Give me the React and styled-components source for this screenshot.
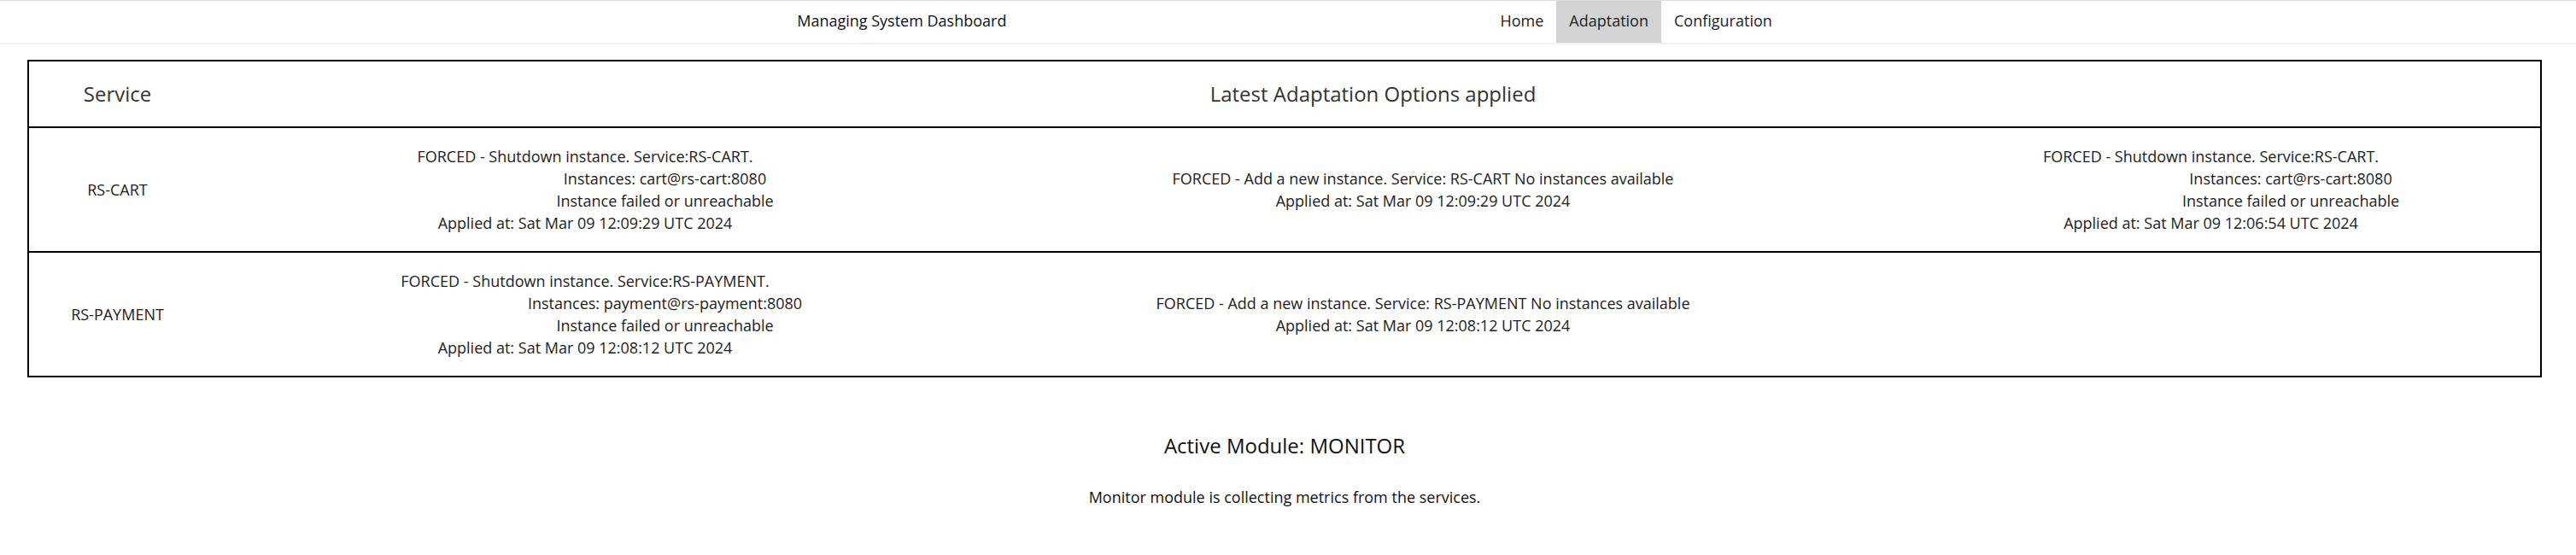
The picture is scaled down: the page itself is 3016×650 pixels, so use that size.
import React from 'react';
import styled, { createGlobalStyle } from 'styled-components';

const GlobalStyle = createGlobalStyle`
  body {
    margin: 0;
    background: #ffffff;
    font-family: "Open Sans", "DejaVu Sans", sans-serif;
    font-size: 18px;
    color: #222222;
  }
`;

const NavBar = styled.nav`
  display: flex;
  justify-content: center;
  align-items: stretch;
  gap: 563px;
  height: 49px;
  padding-left: 7px;
  border-top: 1px solid #dddddd;
  border-bottom: 2px solid #f1f1f1;
`;

const Brand = styled.div`
  display: flex;
  align-items: center;
  padding-bottom: 3px;
  color: #111111;
`;

const NavLinks = styled.ul`
  display: flex;
  margin: 0;
  padding: 0;
  list-style: none;
`;

const NavLink = styled.li`
  display: flex;
  align-items: center;
  padding: 0 15px 3px;
  color: #222222;
  background: ${(p) => (p.active ? '#d3d3d3' : 'transparent')};
  cursor: pointer;
`;

const Main = styled.main`
  margin: 18px 40px 0 32px;
`;

const Table = styled.table`
  width: 100%;
  table-layout: fixed;
  border-collapse: separate;
  border-spacing: 0;
  border: 2px solid #000000;
`;

const HeadCell = styled.th`
  padding: 22px 0;
  font-size: 24px;
  font-weight: 400;
  line-height: 32px;
  color: #333333;
  text-align: center;
  border-bottom: 2px solid #000000;
`;

const Cell = styled.td`
  padding: 20px 0;
  line-height: 26px;
  text-align: center;
  vertical-align: middle;
  border-bottom: ${(p) => (p.last ? 'none' : '2px solid #000000')};
`;

const Line = styled.div`
  padding-left: ${(p) => (p.indent ? '187px' : '0')};
  white-space: nowrap;
`;

const Module = styled.section`
  margin-top: 63px;
  text-align: center;
`;

const ModuleTitle = styled.h2`
  margin: 0;
  font-size: 24px;
  font-weight: 400;
  color: #111111;
`;

const ModuleText = styled.p`
  margin: 32px 0 0;
  color: #111111;
`;

const rows = [
  {
    service: 'RS-CART',
    options: [
      {
        title: 'FORCED - Shutdown instance. Service:RS-CART.',
        details: ['Instances: cart@rs-cart:8080', 'Instance failed or unreachable'],
        applied: 'Sat Mar 09 12:09:29 UTC 2024',
      },
      {
        title: 'FORCED - Add a new instance. Service: RS-CART No instances available',
        details: [],
        applied: 'Sat Mar 09 12:09:29 UTC 2024',
      },
      {
        title: 'FORCED - Shutdown instance. Service:RS-CART.',
        details: ['Instances: cart@rs-cart:8080', 'Instance failed or unreachable'],
        applied: 'Sat Mar 09 12:06:54 UTC 2024',
      },
    ],
  },
  {
    service: 'RS-PAYMENT',
    options: [
      {
        title: 'FORCED - Shutdown instance. Service:RS-PAYMENT.',
        details: ['Instances: payment@rs-payment:8080', 'Instance failed or unreachable'],
        applied: 'Sat Mar 09 12:08:12 UTC 2024',
      },
      {
        title: 'FORCED - Add a new instance. Service: RS-PAYMENT No instances available',
        details: [],
        applied: 'Sat Mar 09 12:08:12 UTC 2024',
      },
      null,
    ],
  },
];

function Option({ option }) {
  if (!option) return null;
  return (
    <>
      <Line>{option.title}</Line>
      {option.details.map((d) => (
        <Line indent key={d}>
          {d}
        </Line>
      ))}
      <Line>Applied at: {option.applied}</Line>
    </>
  );
}

export default function App() {
  return (
    <>
      <GlobalStyle />
      <NavBar>
        <Brand>Managing System Dashboard</Brand>
        <NavLinks>
          <NavLink>Home</NavLink>
          <NavLink active>Adaptation</NavLink>
          <NavLink>Configuration</NavLink>
        </NavLinks>
      </NavBar>
      <Main>
        <Table>
          <colgroup>
            <col style={{ width: 207 }} />
            <col style={{ width: 888 }} />
            <col style={{ width: 1074 }} />
            <col />
          </colgroup>
          <thead>
            <tr>
              <HeadCell>Service</HeadCell>
              <HeadCell colSpan={3}>Latest Adaptation Options applied</HeadCell>
            </tr>
          </thead>
          <tbody>
            {rows.map((row, i) => {
              const last = i === rows.length - 1;
              return (
                <tr key={row.service}>
                  <Cell last={last}>{row.service}</Cell>
                  {row.options.map((opt, j) => (
                    <Cell last={last} key={j}>
                      <Option option={opt} />
                    </Cell>
                  ))}
                </tr>
              );
            })}
          </tbody>
        </Table>
        <Module>
          <ModuleTitle>Active Module: MONITOR</ModuleTitle>
          <ModuleText>Monitor module is collecting metrics from the services.</ModuleText>
        </Module>
      </Main>
    </>
  );
}
